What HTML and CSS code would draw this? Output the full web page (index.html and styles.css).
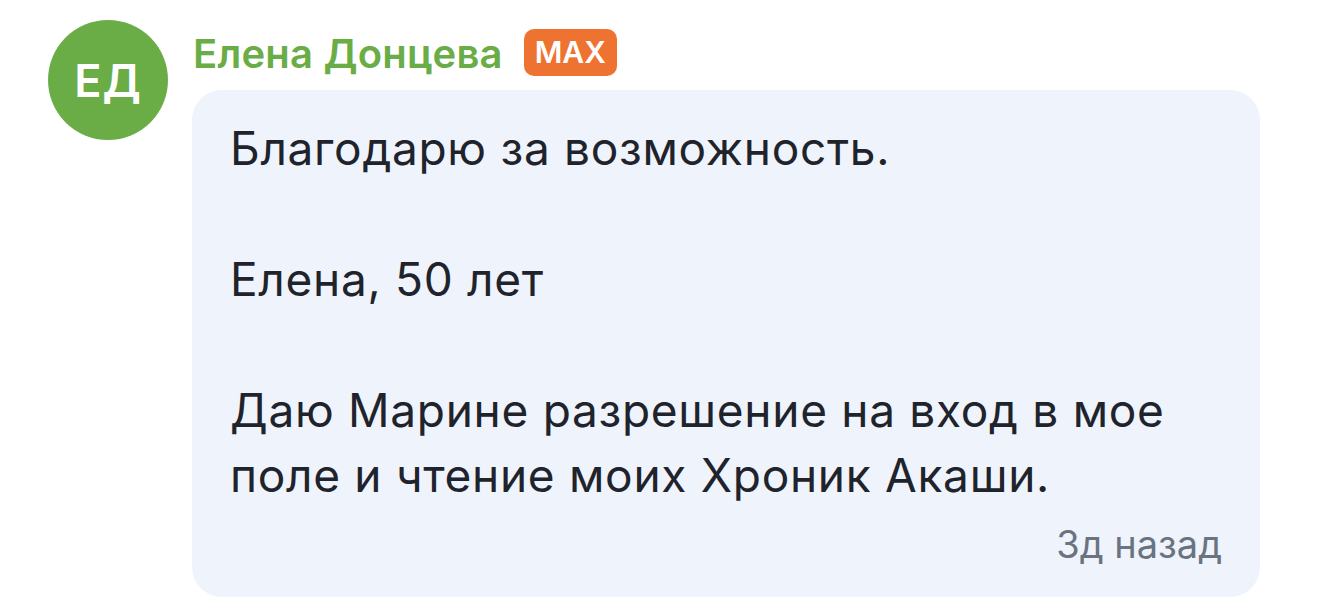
FILE: index.html
```html
<!DOCTYPE html>
<html lang="ru">
<head>
<meta charset="utf-8">
<link rel="stylesheet" href="styles.css">
</head>
<body>
<div class="comment">
  <div class="avatar">ЕД</div>
  <div class="main">
    <div class="head">
      <span class="name">Елена Донцева</span>
      <span class="badge">MAX</span>
    </div>
    <div class="bubble">
      <p class="text">Благодарю за возможность.<br><br>Елена, 50 лет<br><br>Даю Марине разрешение на вход в мое поле и чтение моих Хроник Акаши.</p>
      <div class="time">3д назад</div>
    </div>
  </div>
</div>
</body>
</html>
```
FILE: styles.css
```css
html, body {
  margin: 0;
  padding: 0;
  background: #ffffff;
}
body {
  font-family: Inter, "Noto Sans", sans-serif;
}
.comment {
  display: flex;
  align-items: flex-start;
  padding: 20px 0 0 48px;
  gap: 24px;
}
.avatar {
  flex: none;
  width: 120px;
  height: 120px;
  border-radius: 50%;
  background: #6aad47;
  color: #ffffff;
  display: flex;
  align-items: center;
  justify-content: center;
  font-size: 45px;
  font-weight: 600;
  letter-spacing: 1px;
}
.main {
  width: 1068px;
}
.head {
  display: flex;
  align-items: center;
  gap: 21px;
  height: 48px;
  margin-top: 10px;
  padding-left: 1px;
}
.name {
  color: #6aad47;
  font-size: 40px;
  font-weight: 600;
  line-height: 48px;
  letter-spacing: 0.2px;
}
.badge {
  background: #ee7330;
  color: #ffffff;
  font-size: 30px;
  font-weight: 600;
  padding: 0 11px;
  border-radius: 10px;
  line-height: 47px;
  margin-top: -3px;
}
.bubble {
  margin-top: 12px;
  background: #eff3fb;
  border-radius: 30px;
  padding: 25.5px 38px 30px 38px;
}
.text {
  margin: 0;
  color: #1f232c;
  font-size: 46px;
  line-height: 65.5px;
  letter-spacing: 0.7px;
}
.time {
  text-align: right;
  color: #6b7380;
  font-size: 38px;
  line-height: 46px;
  margin-top: 12.5px;
}
```
